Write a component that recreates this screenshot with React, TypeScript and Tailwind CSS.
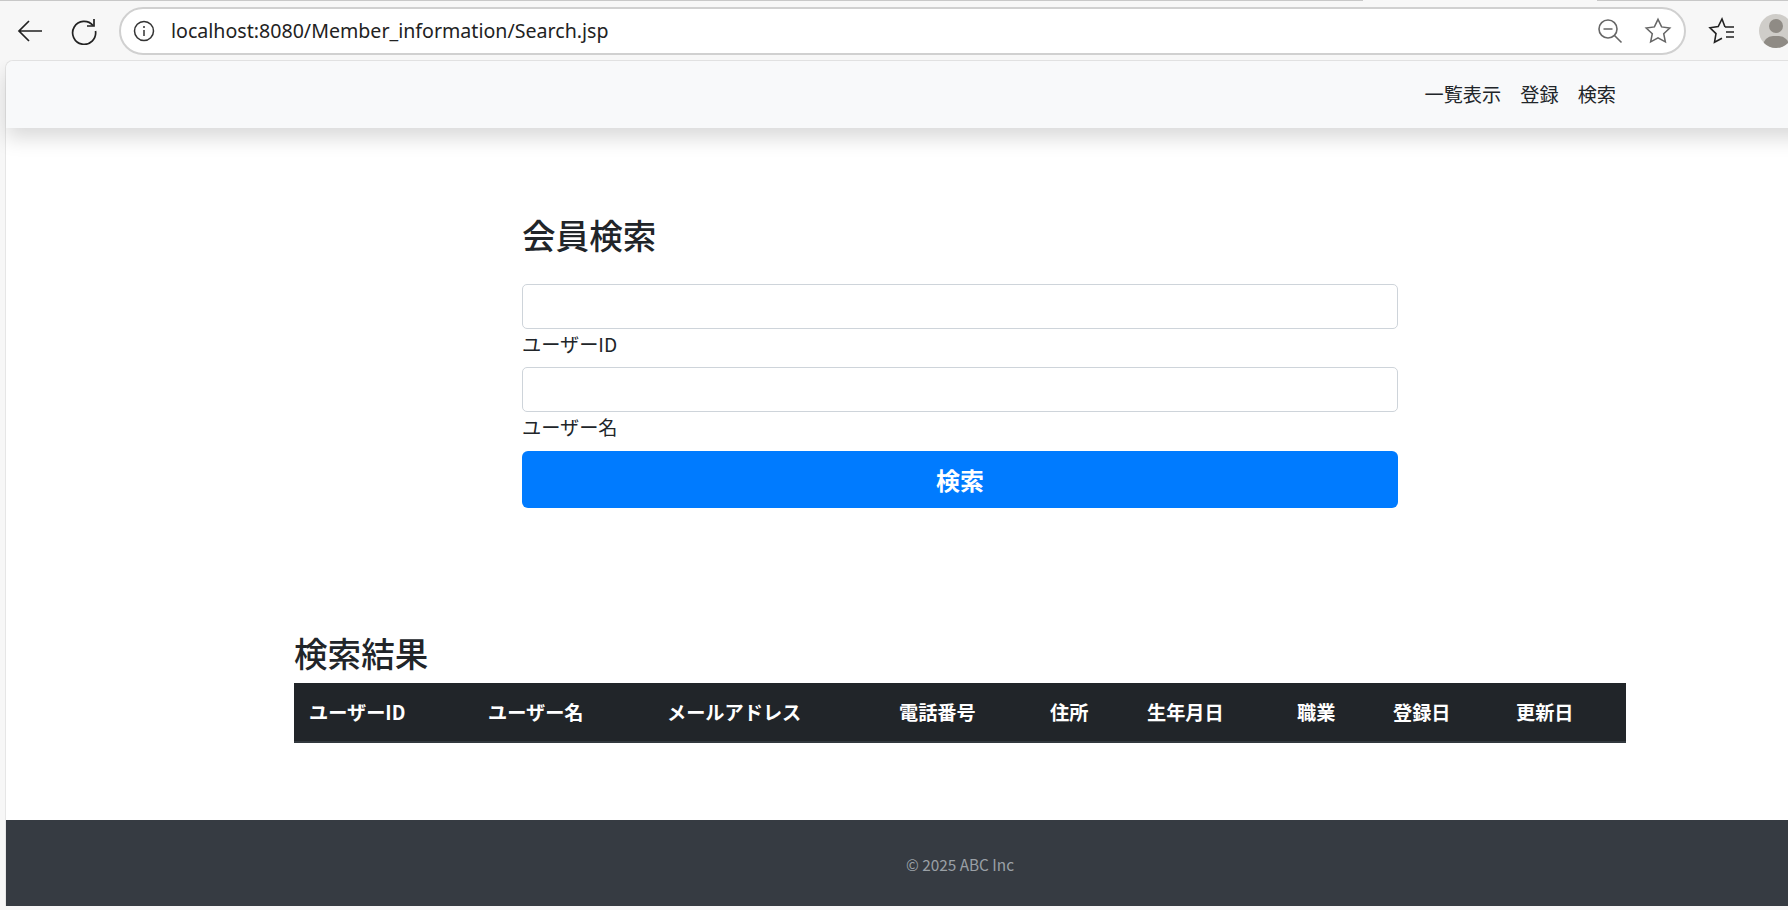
const font = "font-['Noto_Sans_CJK_JP','Noto_Sans',sans-serif]";

const columns = [
  { label: 'ユーザーID', width: 'w-[179px]' },
  { label: 'ユーザー名', width: 'w-[179px]' },
  { label: 'メールアドレス', width: 'w-[232px]' },
  { label: '電話番号', width: 'w-[151px]' },
  { label: '住所', width: 'w-[97px]' },
  { label: '生年月日', width: 'w-[150px]' },
  { label: '職業', width: 'w-[96px]' },
  { label: '登録日', width: 'w-[123px]' },
  { label: '更新日', width: 'w-[125px]' },
];

const BrowserBar = () => (
  <div className="relative flex h-[60px] w-[1788px] shrink-0 items-center bg-[#f7f7f7] pt-[1px]">
    <div className="absolute left-0 top-0 h-px w-[1363px] bg-[#c8c8c8]" />
    <div className="absolute left-[1597px] top-0 h-px w-[191px] bg-[#c8c8c8]" />
    <svg width="28" height="28" viewBox="0 0 28 28" fill="none" stroke="#222" strokeWidth="1.7" className="ml-[16px] shrink-0">
      <path d="M3 14h23M13 4 3 14l10 10" />
    </svg>
    <svg width="28" height="28" viewBox="0 0 28 28" fill="none" stroke="#222" strokeWidth="1.7" className="ml-[26px] shrink-0">
      <path d="M23 8.5A11.5 11.5 0 1 0 25.5 14" />
      <path d="M24 2v7h-7" />
    </svg>
    <div className="ml-[21px] flex h-[48px] w-[1567px] shrink-0 items-center rounded-full border-2 border-[#d0d0d0] bg-white">
      <svg width="22" height="22" viewBox="0 0 22 22" fill="none" stroke="#333" strokeWidth="1.5" className="ml-[12px]">
        <circle cx="11" cy="11" r="9.5" />
        <path d="M11 10v6M11 6v2" />
      </svg>
      <span className="ml-[16px] text-[19.6px] text-[#222] font-['Noto_Sans',sans-serif]">localhost:8080/Member_information/Search.jsp</span>
      <svg width="26" height="26" viewBox="0 0 26 26" fill="none" stroke="#666" strokeWidth="1.6" className="ml-auto">
        <circle cx="11" cy="11" r="9" />
        <path d="M6.5 11h9M17.5 17.5l7 7" />
      </svg>
      <svg width="28" height="28" viewBox="0 0 24 24" fill="none" stroke="#666" strokeWidth="1.3" className="ml-[21px] mr-[12px]">
        <path d="m12 2 3.1 6.5 7 .9-5.2 4.9 1.4 7L12 17.8l-6.3 3.5 1.4-7-5.2-4.9 7-.9z" />
      </svg>
    </div>
    <svg width="28" height="28" viewBox="0 0 28 28" fill="none" stroke="#222" strokeWidth="1.6" className="ml-[22px] shrink-0">
      <path d="M17 10 14 2l-3.8 7.6-8.2 1.2 6 5.8-1.5 8.6 7.5-4" />
      <path d="M17 10h9M18 15h8M18 20h8" />
    </svg>
    <div className="relative ml-[23px] h-[34px] w-[34px] shrink-0 overflow-hidden rounded-full bg-[#cfcdc9]">
      <div className="absolute left-[10px] top-[5px] h-[14px] w-[14px] rounded-full bg-[#8f8b85]" />
      <div className="absolute left-[4px] top-[22px] h-[20px] w-[26px] rounded-full bg-[#8f8b85]" />
    </div>
  </div>
);

export default function App() {
  return (
    <div className={`flex h-[910px] w-[1788px] flex-col overflow-hidden bg-[#f7f7f7] text-[19.2px] text-[#212529] ${font}`}>
      <BrowserBar />
      <div className="ml-[5px] flex h-[846px] w-[1909px] shrink-0 flex-col rounded-tl-lg border-l border-t border-[#e6e6e6] bg-white">
        <nav className="h-[67px] shrink-0 rounded-tl-lg bg-[#f8f9fa] shadow-[0_10px_20px_rgba(0,0,0,0.15)]">
          <ul className="mx-auto flex h-full w-[1332px] items-center justify-end">
            <li className="px-[9.5px]">一覧表示</li>
            <li className="px-[9.5px]">登録</li>
            <li className="pl-[9.5px] pr-[10px]">検索</li>
          </ul>
        </nav>

        <main className="flex grow flex-col items-center">
          <form className="mt-[87px] w-[876px]">
            <h3 className="mb-[29px] text-[33.6px] font-medium leading-[40px]">会員検索</h3>
            <input className="block h-[45px] w-full rounded-[5px] border border-[#ced4da] bg-white" />
            <label className="mt-[1px] block leading-[28px]">ユーザーID</label>
            <input className="mt-[9px] block h-[45px] w-full rounded-[5px] border border-[#ced4da] bg-white" />
            <label className="mt-[1px] block leading-[28px]">ユーザー名</label>
            <button type="button" className="mt-[10px] block h-[57px] w-full rounded-[6px] bg-[#007bff] text-[24px] font-semibold text-white">
              検索
            </button>
          </form>

          <section className="mt-[125px] w-[1332px]">
            <h3 className="mb-[10px] text-[33.6px] font-medium leading-[40px]">検索結果</h3>
            <table className="w-full table-fixed border-collapse">
              <thead>
                <tr className="h-[59px] border-b-2 border-[#32383e] bg-[#212529] text-left text-white">
                  {columns.map((col) => (
                    <th key={col.label} className={`px-[15px] text-[19.2px] font-bold ${col.width}`}>
                      {col.label}
                    </th>
                  ))}
                </tr>
              </thead>
            </table>
          </section>
        </main>

        <footer className="flex h-[86px] shrink-0 items-center justify-center bg-[#363b42] pt-[3px] text-[15.36px] text-[#9aa0a6]">
          © 2025 ABC Inc
        </footer>
      </div>
    </div>
  );
}
